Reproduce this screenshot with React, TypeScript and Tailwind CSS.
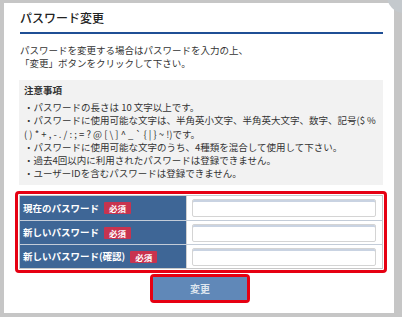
import React from "react";

// パスワード変更ダイアログ
const NOTES = [
  "・パスワードの長さは 10 文字以上です。",
  "・パスワードに使用可能な文字は、半角英小文字、半角英大文字、数字、記号($ %",
  "( ) * + , - . / : ; = ? @ [ \\ ] ^ _ ` { | } ~ !)です。",
  "・パスワードに使用可能な文字のうち、4種類を混合して使用して下さい。",
  "・過去4回以内に利用されたパスワードは登録できません。",
  "・ユーザーIDを含むパスワードは登録できません。",
];

const FIELDS = ["現在のパスワード", "新しいパスワード", "新しいパスワード(確認)"];

export default function App() {
  return (
    <div
      className="relative h-[317px] w-[402px] overflow-hidden bg-[#c6c6c6] pl-[4px] pt-[3px] text-[#333]"
      style={{ fontFamily: '"Noto Sans CJK JP", "Noto Sans", sans-serif' }}
    >
      <div className="h-[310px] w-[390px] bg-white pl-[15px] pr-[6px]">
        <h1 className="ml-[1px] mr-[5px] border-b-2 border-[#1f4f95] pb-[5px] pt-[6px] text-[12px] font-medium leading-[18px] text-[#222]">
          パスワード変更
        </h1>

        <p className="ml-[1px] mt-[10px] text-[9.5px] leading-[13px]">
          パスワードを変更する場合はパスワードを入力の上、
          <br />
          「変更」ボタンをクリックして下さい。
        </p>

        <div className="mr-[5px] mt-[10px] h-[105px] bg-[#f2f2f2] px-[5px] pt-[4px]">
          <div className="text-[9.5px] font-bold leading-[13px]">注意事項</div>
          <div className="mt-[4px] text-[9.5px] leading-[13.3px]">
            {NOTES.map((n) => (
              <div key={n} className="whitespace-nowrap">
                {n}
              </div>
            ))}
          </div>
        </div>

        <div className="ml-[-4px] mr-[1px] mt-[6px] rounded-[4px] border-[3px] border-[#e60012] p-[1px]">
          <div className="border border-[#c8c8c8]">
            {FIELDS.map((f, i) => (
              <div key={f} className={`flex h-[24px] ${i > 0 ? "border-t border-[#c3ccd8]" : ""}`}>
                <div className="flex w-[166px] items-center gap-[5px] bg-[#3e6696] pl-[3px] text-[9.5px] font-bold text-white">
                  <span>{f}</span>
                  <span className="rounded-[1px] bg-[#c8334f] px-[5px] text-[8.5px] leading-[12px]">必須</span>
                </div>
                <div className="flex flex-1 items-center border-l border-[#d0d0d0] pl-[5px] pr-[6px]">
                  <div className="h-[18px] w-full rounded-[2px] border border-[#d4d4d4] bg-white shadow-[inset_0_2px_0_#c9d3e2]" />
                </div>
              </div>
            ))}
          </div>
        </div>

        <div className="mt-[1px] flex justify-center">
          <div className="mr-[7px] rounded-[4px] border-[3px] border-[#e60012]">
            <div className="flex h-[23px] w-[94px] items-center justify-center bg-[#6088b8] text-[10px] font-bold text-[#dfe6ef]">
              変更
            </div>
          </div>
        </div>
      </div>

      <div className="absolute right-[-19px] top-[-21px] h-[34px] w-[34px] rounded-full bg-[#c4c9cd]" />
    </div>
  );
}
